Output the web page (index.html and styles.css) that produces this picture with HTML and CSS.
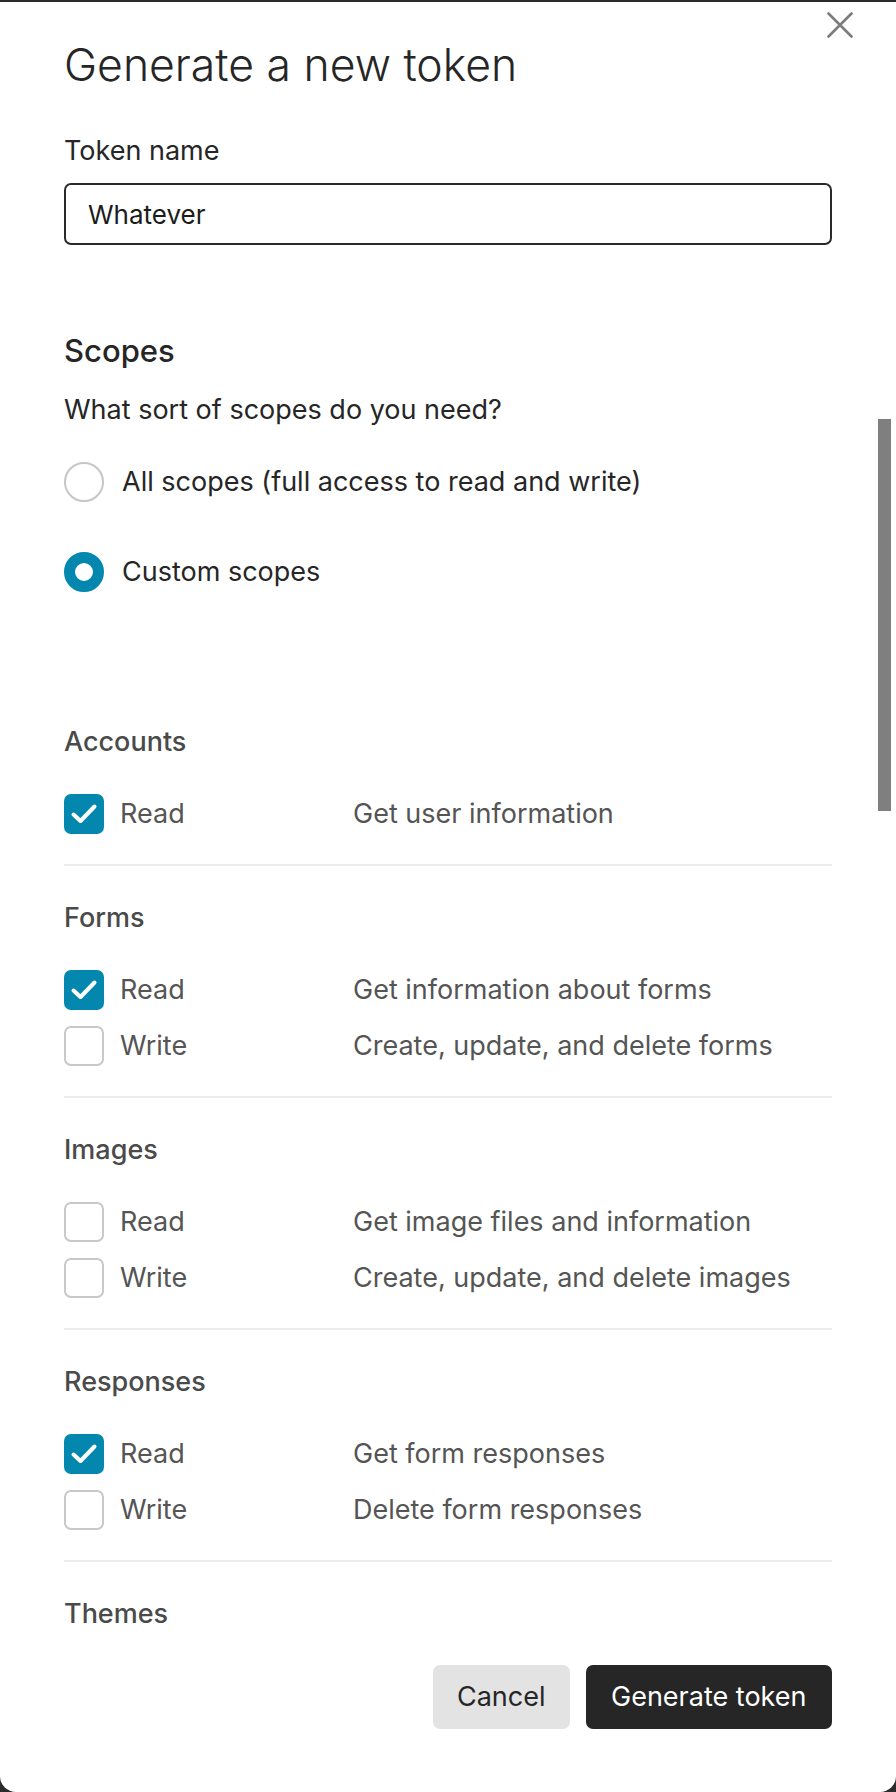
FILE: index.html
```html
<!DOCTYPE html>
<html lang="en">
<head>
<meta charset="utf-8">
<title>Generate a new token</title>
<link rel="stylesheet" href="styles.css">
</head>
<body>
<div class="modal">
  <button class="close" aria-label="Close">
    <svg viewBox="0 0 26 26" width="26" height="26"><path d="M1.5 1.5 L24.5 24.5 M24.5 1.5 L1.5 24.5" stroke="#7c7c7c" stroke-width="2.6" stroke-linecap="round" fill="none"/></svg>
  </button>
  <div class="scroll-thumb"></div>

  <h1 class="title">Generate a new token</h1>

  <label class="field-label" for="token-name">Token name</label>
  <input class="text-input" id="token-name" type="text" value="Whatever">

  <h2 class="scopes-title">Scopes</h2>
  <p class="question">What sort of scopes do you need?</p>

  <div class="radio-group">
    <div class="radio-row">
      <span class="radio"></span>
      <span class="radio-label">All scopes (full access to read and write)</span>
    </div>
    <div class="radio-row">
      <span class="radio radio-on"></span>
      <span class="radio-label">Custom scopes</span>
    </div>
  </div>

  <div class="scope-list">
    <section class="scope-section">
      <h3 class="scope-name">Accounts</h3>
      <div class="scope-rows">
        <div class="scope-row">
          <span class="check check-on"><svg viewBox="0 0 40 40" width="40" height="40"><path d="M9.5 20.5 L16.5 27 L30.5 12.5" stroke="#fff" stroke-width="4" stroke-linecap="round" stroke-linejoin="round" fill="none"/></svg></span>
          <span class="perm">Read</span>
          <span class="desc">Get user information</span>
        </div>
      </div>
    </section>

    <section class="scope-section">
      <h3 class="scope-name">Forms</h3>
      <div class="scope-rows">
        <div class="scope-row">
          <span class="check check-on"><svg viewBox="0 0 40 40" width="40" height="40"><path d="M9.5 20.5 L16.5 27 L30.5 12.5" stroke="#fff" stroke-width="4" stroke-linecap="round" stroke-linejoin="round" fill="none"/></svg></span>
          <span class="perm">Read</span>
          <span class="desc">Get information about forms</span>
        </div>
        <div class="scope-row">
          <span class="check"></span>
          <span class="perm">Write</span>
          <span class="desc">Create, update, and delete forms</span>
        </div>
      </div>
    </section>

    <section class="scope-section">
      <h3 class="scope-name">Images</h3>
      <div class="scope-rows">
        <div class="scope-row">
          <span class="check"></span>
          <span class="perm">Read</span>
          <span class="desc">Get image files and information</span>
        </div>
        <div class="scope-row">
          <span class="check"></span>
          <span class="perm">Write</span>
          <span class="desc">Create, update, and delete images</span>
        </div>
      </div>
    </section>

    <section class="scope-section">
      <h3 class="scope-name">Responses</h3>
      <div class="scope-rows">
        <div class="scope-row">
          <span class="check check-on"><svg viewBox="0 0 40 40" width="40" height="40"><path d="M9.5 20.5 L16.5 27 L30.5 12.5" stroke="#fff" stroke-width="4" stroke-linecap="round" stroke-linejoin="round" fill="none"/></svg></span>
          <span class="perm">Read</span>
          <span class="desc">Get form responses</span>
        </div>
        <div class="scope-row">
          <span class="check"></span>
          <span class="perm">Write</span>
          <span class="desc">Delete form responses</span>
        </div>
      </div>
    </section>

    <section class="scope-section scope-last">
      <h3 class="scope-name">Themes</h3>
    </section>
  </div>

  <div class="footer">
    <button class="btn btn-secondary">Cancel</button>
    <button class="btn btn-primary">Generate token</button>
  </div>
</div>
</body>
</html>
```
FILE: styles.css
```css
* { box-sizing: border-box; }

html, body {
  margin: 0;
  padding: 0;
  background: #2b2b2b;
}

body {
  font-family: "Inter", "Liberation Sans", sans-serif;
  color: #262626;
  -webkit-font-smoothing: antialiased;
}

.modal {
  position: relative;
  margin-top: 2px;
  height: 1790px;
  overflow: hidden;
  background: #ffffff;
  border-radius: 0 0 16px 16px;
  padding: 37px 64px 0 64px;
  display: flex;
  flex-direction: column;
}

.close {
  position: absolute;
  top: 10px;
  right: 43px;
  width: 26px;
  height: 26px;
  padding: 0;
  border: 0;
  background: none;
  display: flex;
}

.scroll-thumb {
  position: absolute;
  top: 417px;
  right: 5px;
  width: 13px;
  height: 392px;
  background: #7f7f7f;
}

.title {
  margin: 0;
  font-size: 44.5px;
  line-height: 52px;
  font-weight: 300;
  color: #262626;
}

.field-label {
  display: block;
  margin-top: 42px;
  font-size: 27px;
  line-height: 36px;
  color: #262626;
}

.text-input {
  display: block;
  margin-top: 14px;
  width: 100%;
  height: 62px;
  border: 2px solid #2a2a2a;
  border-radius: 7px;
  padding: 0 22px;
  font-family: "Inter", "Liberation Sans", sans-serif;
  font-size: 26px;
  color: #1c1c1c;
  background: #fff;
  outline: none;
}

.scopes-title {
  margin: 86px 0 0 0;
  font-size: 31px;
  line-height: 40px;
  font-weight: 500;
  color: #262626;
}

.question {
  margin: 21px 0 0 0;
  font-size: 27px;
  line-height: 36px;
  color: #262626;
}

.radio-group {
  margin-top: 34px;
  display: flex;
  flex-direction: column;
  gap: 50px;
}

.radio-row {
  display: flex;
  align-items: center;
  height: 40px;
  gap: 18px;
}

.radio {
  width: 40px;
  height: 40px;
  flex: none;
  border-radius: 50%;
  border: 2px solid #c6c6c6;
  background: #fff;
}

.radio-on {
  border: 11px solid #0487af;
}

.radio-label {
  font-size: 27px;
  line-height: 36px;
  color: #262626;
}

.scope-list {
  margin-top: 130px;
  display: flex;
  flex-direction: column;
}

.scope-section {
  padding: 32px 0 22px 0;
  border-bottom: 2px solid #ececec;
}

.scope-section:first-child {
  padding-top: 0;
}

.scope-last {
  border-bottom: 0;
  padding-bottom: 0;
}

.scope-name {
  margin: 0;
  font-size: 27px;
  line-height: 40px;
  font-weight: 500;
  color: #4a4a4a;
}

.scope-rows {
  margin-top: 24px;
  display: flex;
  flex-direction: column;
}

.scope-row {
  display: grid;
  grid-template-columns: 40px 233px 1fr;
  column-gap: 16px;
  align-items: center;
  height: 56px;
  font-size: 27px;
  line-height: 36px;
  color: #555555;
}

.scope-row .desc {
  margin-left: -16px;
}

.check {
  width: 40px;
  height: 40px;
  margin-top: -1px;
  border-radius: 7px;
  border: 2px solid #c8c8c8;
  background: #fff;
  display: flex;
}

.check-on {
  border: 0;
  background: #0487af;
}

.footer {
  margin-top: 31px;
  display: flex;
  justify-content: flex-end;
  gap: 16px;
}

.btn {
  height: 64px;
  border: 0;
  border-radius: 7px;
  font-family: "Inter", "Liberation Sans", sans-serif;
  font-size: 27px;
  line-height: 36px;
}

.btn-secondary {
  padding: 0 24px;
  background: #e3e3e3;
  color: #262626;
}

.btn-primary {
  padding: 0 25.5px;
  background: #262626;
  color: #ffffff;
}
```
